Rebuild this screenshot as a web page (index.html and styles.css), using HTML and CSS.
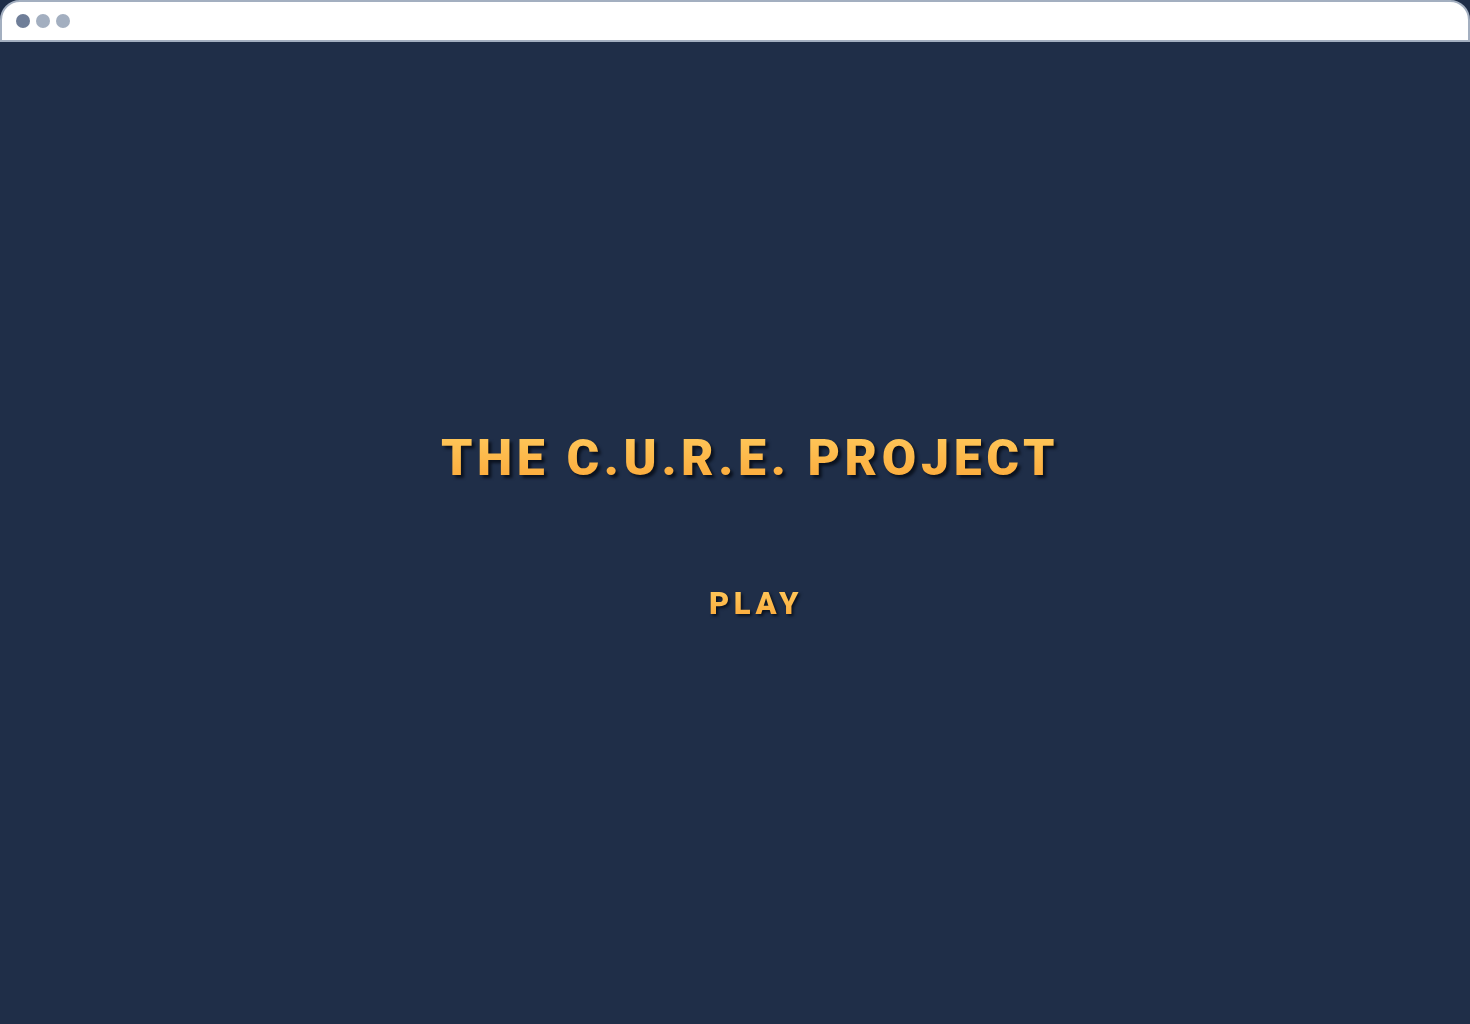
FILE: index.html
```html
<!DOCTYPE html>
<html lang="en">
<head>
<meta charset="utf-8">
<title>The C.U.R.E. Project</title>
<link rel="stylesheet" href="styles.css">
</head>
<body>
<div class="window">
  <div class="titlebar">
    <span class="dot dot-dark"></span>
    <span class="dot"></span>
    <span class="dot"></span>
  </div>
  <main class="screen">
    <h1 class="title">THE C.U.R.E. PROJECT</h1>
    <button class="play">PLAY</button>
  </main>
</div>
</body>
</html>
```
FILE: styles.css
```css
* { box-sizing: border-box; }
html, body { margin: 0; padding: 0; height: 100%; background: #1f2e48; }
body { font-family: Roboto, "Liberation Sans", sans-serif; }
.window {
  height: 1024px;
  display: flex;
  flex-direction: column;
  overflow: hidden;
  background: #1f2e48;
}
.titlebar {
  height: 42px;
  background: #ffffff;
  border: 2px solid #a3afc0;
  border-radius: 20px 20px 0 0;
  display: flex;
  align-items: center;
  gap: 6px;
  padding-left: 14px;
  flex-shrink: 0;
}
.dot { width: 14px; height: 14px; border-radius: 50%; background: #a3afc0; }
.dot-dark { background: #6f7e98; }
.screen {
  flex: 1;
  display: flex;
  flex-direction: column;
  align-items: center;
  background: #1f2e48;
  padding-top: 386px;
  padding-left: 30px;
}
.title {
  margin: 0;
  font-size: 50px;
  font-weight: 900;
  letter-spacing: 4.6px;
  line-height: 60px;
  background: linear-gradient(180deg, #ffcb5e 0%, #fba637 100%);
  -webkit-background-clip: text;
  background-clip: text;
  color: transparent;
  filter: drop-shadow(3px 3px 1.5px rgba(5, 10, 20, 0.8));
}
.play {
  margin-top: 98px;
  margin-left: 12px;
  border: none;
  padding: 0;
  background: linear-gradient(180deg, #ffcb5e 0%, #fba637 100%);
  -webkit-background-clip: text;
  background-clip: text;
  color: transparent;
  font-family: Roboto, "Liberation Sans", sans-serif;
  font-size: 31px;
  font-weight: 900;
  letter-spacing: 4.6px;
  line-height: 36px;
  cursor: pointer;
  filter: drop-shadow(2px 2px 1.5px rgba(5, 10, 20, 0.8));
}
```
